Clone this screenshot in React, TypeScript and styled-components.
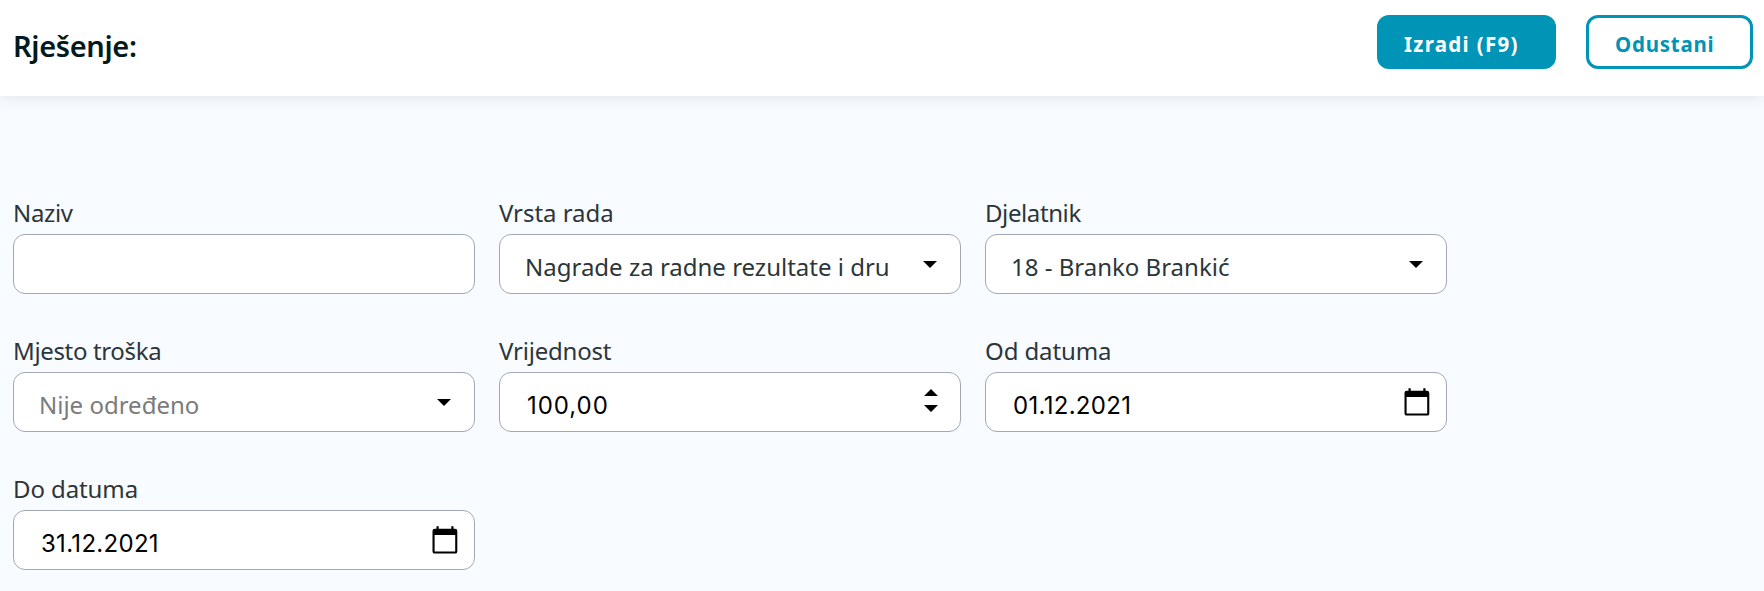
import React from 'react';
import styled, { createGlobalStyle } from 'styled-components';

const GlobalStyle = createGlobalStyle`
  * { box-sizing: border-box; }
  body {
    margin: 0;
    background: #f8fbff;
    font-family: "Noto Sans", sans-serif;
    color: #2c3639;
    overflow: hidden;
  }
`;

const Page = styled.div`
  min-height: 591px;
`;

const Header = styled.header`
  display: flex;
  justify-content: space-between;
  align-items: flex-start;
  height: 96px;
  padding: 15px 11px 0 13px;
  background: #fff;
  box-shadow: 0 0 16px rgba(40, 45, 60, 0.13);
`;

const Title = styled.h1`
  margin: 11px 0 0;
  font-size: 29px;
  line-height: 40px;
  font-weight: 600;
  letter-spacing: -0.35px;
  color: #02191e;
`;

const Actions = styled.div`
  display: flex;
  gap: 30px;
`;

const Button = styled.button<{ $primary?: boolean; $width: number }>`
  width: ${(p) => p.$width}px;
  height: 54px;
  padding: 12px 0 8px ${(p) => (p.$primary ? 24 : 26)}px;
  border: 3px solid #0094b6;
  border-radius: 12px;
  background: ${(p) => (p.$primary ? '#0094b6' : '#fff')};
  color: ${(p) => (p.$primary ? '#fff' : '#0094b6')};
  font: 700 20.5px/28px "Noto Sans", sans-serif;
  letter-spacing: ${(p) => (p.$primary ? 1.3 : 0.75)}px;
  text-align: left;
  white-space: nowrap;
`;

const Form = styled.form`
  display: grid;
  grid-template-columns: repeat(3, 462px);
  gap: 41px 24px;
  padding: 101px 13px 0;
`;

const Field = styled.div`
  display: flex;
  flex-direction: column;
  gap: 5px;
`;

const Label = styled.span<{ $spacing?: number }>`
  font-size: 24px;
  line-height: 32px;
  letter-spacing: ${(p) => p.$spacing ?? -0.05}px;
`;

const Control = styled.div<{ $end: number }>`
  display: flex;
  justify-content: space-between;
  height: 60px;
  padding: 0 ${(p) => p.$end}px 0 25px;
  border: 1px solid #a1a8b5;
  border-radius: 12px;
  background: #fff;
`;

const Value = styled.span<{ $muted?: boolean }>`
  padding-top: 16px;
  font-size: 24px;
  line-height: 32px;
  white-space: nowrap;
  color: ${(p) => (p.$muted ? '#7b7b7b' : 'inherit')};
`;

const Digits = styled(Value)<{ $spacing: number }>`
  padding: 17px 0 0 2px;
  font-family: Inter, sans-serif;
  letter-spacing: ${(p) => p.$spacing}px;
  color: #000;
`;

const Glyph = styled.svg<{ $top: number }>`
  display: block;
  flex: none;
  margin-top: ${(p) => p.$top}px;
`;

const Caret = () => (
  <Glyph $top={26} width="14" height="7" viewBox="0 0 14 7">
    <path d="M0 0h14L7 7z" />
  </Glyph>
);

const Stepper = () => (
  <Glyph $top={16} width="14" height="23" viewBox="0 0 14 23">
    <path d="M0 7h14L7 0zM0 16h14l-7 7z" />
  </Glyph>
);

const Calendar = () => (
  <Glyph $top={15} width="26" height="28" viewBox="0 0 26 28">
    <path
      fillRule="evenodd"
      d="M4.5 0.3h2.2v2.5h12.6v-2.5h2.2v2.5h1.6a2.2 2.2 0 0 1 2.2 2.2v20.4a2.2 2.2 0 0 1-2.2 2.2H2.7a2.2 2.2 0 0 1-2.2-2.2V5a2.2 2.2 0 0 1 2.2-2.2h1.8zM2.6 9v16.6h20.6V9z"
    />
  </Glyph>
);

type Kind = 'text' | 'select' | 'number' | 'date';

const fields: { label: string; kind: Kind; spacing?: number; value?: string; empty?: boolean }[] = [
  { label: 'Naziv', kind: 'text', spacing: -0.35 },
  { label: 'Vrsta rada', kind: 'select', value: 'Nagrade za radne rezultate i dru' },
  { label: 'Djelatnik', kind: 'select', spacing: -0.4, value: '18 - Branko Brankić' },
  { label: 'Mjesto troška', kind: 'select', spacing: -0.35, value: 'Nije određeno', empty: true },
  { label: 'Vrijednost', kind: 'number', spacing: -0.2, value: '100,00' },
  { label: 'Od datuma', kind: 'date', spacing: -0.1, value: '01.12.2021' },
  { label: 'Do datuma', kind: 'date', spacing: -0.1, value: '31.12.2021' },
];

const insets: Record<Kind, number> = { text: 23, select: 23, number: 22, date: 16 };

export default function App() {
  return (
    <Page>
      <GlobalStyle />
      <Header>
        <Title>Rješenje:</Title>
        <Actions>
          <Button $primary $width={179}>Izradi (F9)</Button>
          <Button $width={167}>Odustani</Button>
        </Actions>
      </Header>
      <Form>
        {fields.map(({ label, kind, spacing, value, empty }) => (
          <Field key={label}>
            <Label $spacing={spacing}>{label}</Label>
            <Control $end={insets[kind]}>
              {kind === 'select' && <Value $muted={empty}>{value}</Value>}
              {kind === 'number' && <Digits $spacing={0.95}>{value}</Digits>}
              {kind === 'date' && <Digits $spacing={0.3}>{value}</Digits>}
              {kind === 'select' && <Caret />}
              {kind === 'number' && <Stepper />}
              {kind === 'date' && <Calendar />}
            </Control>
          </Field>
        ))}
      </Form>
    </Page>
  );
}
